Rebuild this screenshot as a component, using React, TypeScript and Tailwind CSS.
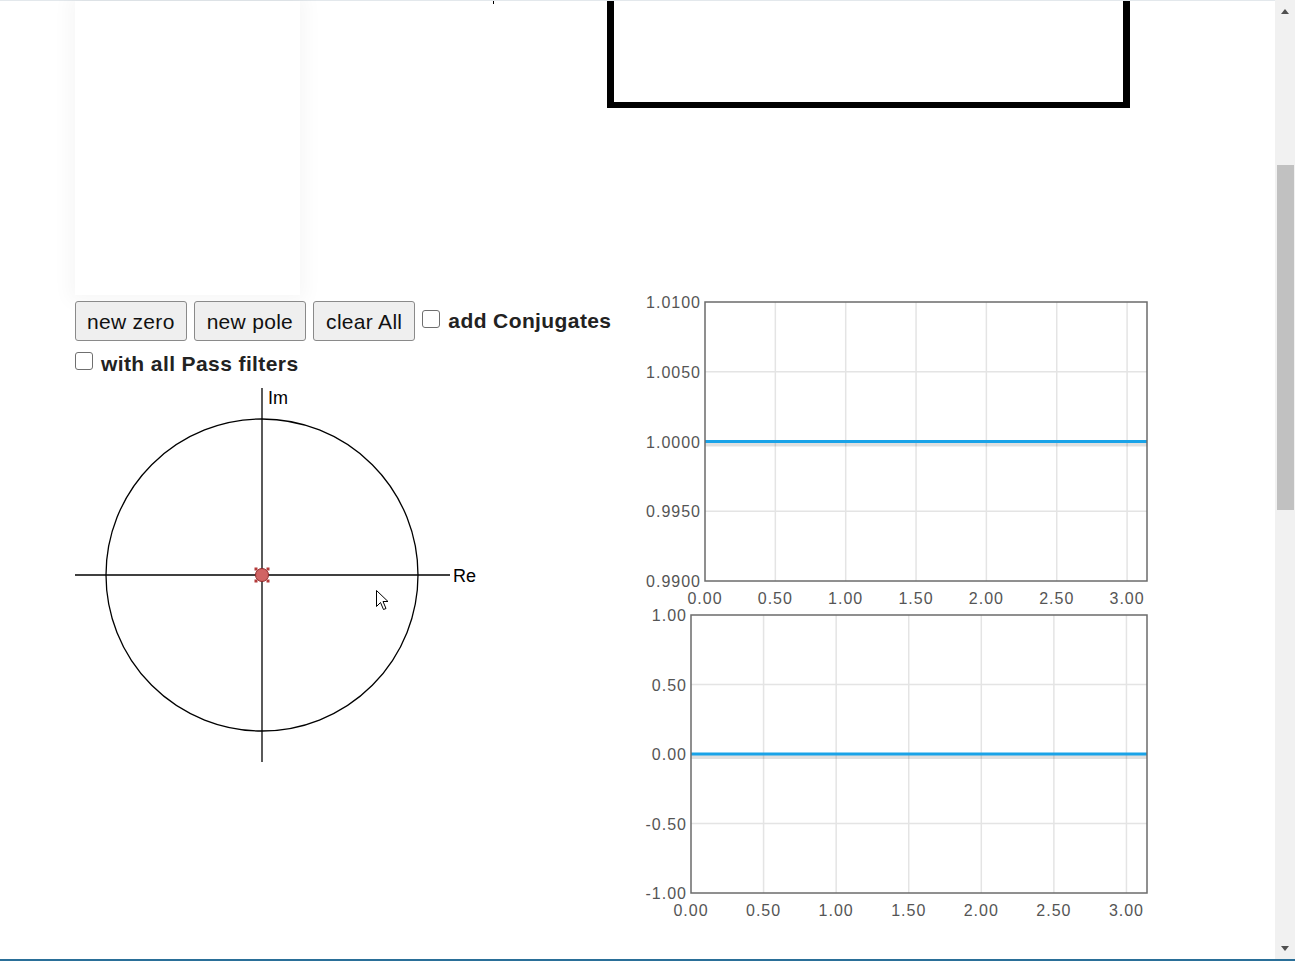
import React from 'react';

const font = { fontFamily: '"Liberation Sans", Arial, sans-serif' };

type ChartProps = {
  left: number;
  top: number;
  right: number;
  bottom: number;
  yLabels: string[];
  lineIndex: number;
};

const xTicks = [0, 0.5, 1, 1.5, 2, 2.5, 3];

function Chart({ left, top, right, bottom, yLabels, lineIndex }: ChartProps) {
  const w = right - left;
  const h = bottom - top;
  const sx = (v: number) => left + (v / Math.PI) * w;
  const sy = (i: number) => top + (i * h) / (yLabels.length - 1);
  const lineY = sy(lineIndex);
  return (
    <g>
      {xTicks.slice(1).map((t) => (
        <line key={t} x1={sx(t)} x2={sx(t)} y1={top} y2={bottom} stroke="#e4e4e4" strokeWidth={1.5} />
      ))}
      {yLabels.map((_, i) =>
        i > 0 && i < yLabels.length - 1 ? (
          <line key={i} x1={left} x2={right} y1={sy(i)} y2={sy(i)} stroke="#e4e4e4" strokeWidth={1.5} />
        ) : null
      )}
      <line x1={left} x2={right} y1={lineY + 3} y2={lineY + 3} stroke="rgba(0,0,0,0.12)" strokeWidth={4} />
      <line x1={left} x2={right} y1={lineY} y2={lineY} stroke="#1aa3e8" strokeWidth={3} />
      <rect x={left} y={top} width={w} height={h} fill="none" stroke="#6b6b6b" strokeWidth={1.5} />
      {yLabels.map((l, i) => (
        <text key={l} x={left - 4} y={sy(i) + 6} textAnchor="end" fontSize={16} letterSpacing={1} fill="#555">
          {l}
        </text>
      ))}
      {xTicks.map((t) => (
        <text key={t} x={sx(t)} y={bottom + 23} textAnchor="middle" fontSize={16} letterSpacing={1} fill="#555">
          {t.toFixed(2)}
        </text>
      ))}
    </g>
  );
}

function PoleZeroPlot() {
  return (
    <svg width={405} height={385} style={font} className="block">
      <circle cx={187} cy={190} r={156} fill="none" stroke="#000" strokeWidth={1.3} />
      <line x1={187} x2={187} y1={3} y2={377} stroke="#000" strokeWidth={1.3} />
      <line x1={0} x2={375} y1={190} y2={190} stroke="#000" strokeWidth={1.3} />
      <text x={193} y={19} fontSize={18} fill="#000">Im</text>
      <text x={378} y={197} fontSize={18} fill="#000">Re</text>
      {/* zero marker */}
      <circle cx={187} cy={190} r={6.5} fill="#d06464" stroke="#8f2a2a" strokeWidth={1} />
      {[[-6, -6], [6, -6], [-6, 6], [6, 6]].map(([dx, dy]) => (
        <rect key={`${dx}${dy}`} x={187 + dx - 1.5} y={190 + dy - 1.5} width={3} height={3} fill="#b33a3a" />
      ))}
      {/* mouse cursor */}
      <path
        d="M301.5 205.5 L301.5 221.5 L305.5 217.5 L308.5 224.5 L311 223.5 L308 216.5 L313 216.5 Z"
        fill="#fff"
        stroke="#000"
        strokeWidth={1}
        strokeLinejoin="round"
      />
    </svg>
  );
}

function Checkbox({ className = '' }: { className?: string }) {
  return (
    <span
      className={`inline-block w-[18px] h-[18px] border border-[#6f6f6f] rounded-[3px] bg-white shrink-0 ${className}`}
    />
  );
}

function Btn({ children, className = 'px-[12px]' }: { children: React.ReactNode; className?: string }) {
  return (
    <button
      className={`h-[40px] text-[21px] tracking-[0.3px] leading-none bg-[#efefef] border border-[#8a8a8a] rounded-[3px] text-[#111] ${className}`}
    >
      {children}
    </button>
  );
}

export default function App() {
  return (
    <div style={font} className="w-[1295px] h-[961px] flex flex-col overflow-hidden bg-white border-b-2 border-[#2a6f98]">
      <div className="flex flex-1 min-h-0">
        <main className="flex-1 border-t border-[#e3e8ec] flex flex-col">
          {/* top row */}
          <div className="flex items-start pl-[75px] h-[289px]">
            <div className="w-[225px] h-[294px] bg-white shadow-[0_0_18px_6px_rgba(0,0,0,0.035)]" />
            <div className="ml-[193px] w-[1px] h-[3px] bg-black" />
            <div className="ml-[113px] w-[523px] h-[107px] border-x-[7px] border-b-[6px] border-black bg-white" />
          </div>

          {/* bottom section */}
          <div className="flex pl-[75px]">
            <div className="w-[555px] pt-[11px] flex flex-col">
              <div className="flex items-center gap-[7px] h-[40px]">
                <Btn className="px-[11px]">new zero</Btn>
                <Btn>new pole</Btn>
                <Btn>clear All</Btn>
                <div className="flex items-center gap-[8px]">
                  <Checkbox className="-mt-[4px]" />
                  <span className="text-[21px] tracking-[0.4px] font-bold text-[#222]">add Conjugates</span>
                </div>
              </div>
              <div className="flex items-center gap-[8px] h-[24px] mt-[11px]">
                <Checkbox className="-mt-[6px]" />
                <span className="text-[21px] tracking-[0.4px] font-bold text-[#222]">with all Pass filters</span>
              </div>
              <div className="mt-[9px]">
                <PoleZeroPlot />
              </div>
            </div>
            <svg width={530} height={640} className="block" style={font}>
              <Chart
                left={75}
                top={12}
                right={517}
                bottom={291}
                yLabels={['1.0100', '1.0050', '1.0000', '0.9950', '0.9900']}
                lineIndex={2}
              />
              <Chart
                left={61}
                top={325}
                right={517}
                bottom={603}
                yLabels={['1.00', '0.50', '0.00', '-0.50', '-1.00']}
                lineIndex={2}
              />
            </svg>
          </div>
        </main>

        {/* scrollbar */}
        <aside className="w-[20px] bg-[#f1f1f1] flex flex-col items-center">
          <div className="mt-[9px] w-0 h-0 border-x-[4px] border-x-transparent border-b-[5px] border-b-[#505050]" />
          <div className="mt-[151px] w-[17px] h-[345px] bg-[#c1c1c1]" />
          <div className="flex-1" />
          <div className="mb-[8px] w-0 h-0 border-x-[4px] border-x-transparent border-t-[5px] border-t-[#505050]" />
        </aside>
      </div>
    </div>
  );
}
